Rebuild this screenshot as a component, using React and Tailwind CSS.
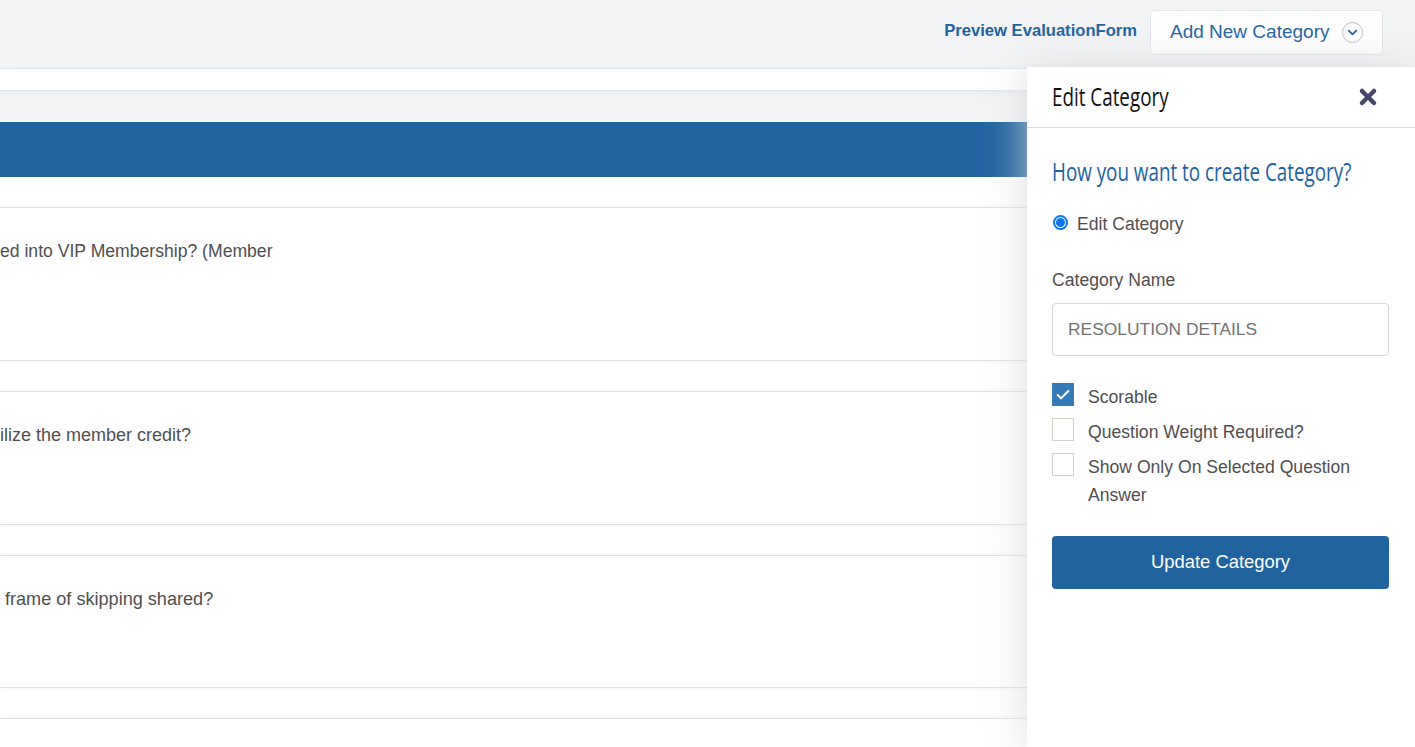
import React from 'react';
import { Check, ChevronDown, X } from 'lucide-react';

const questions = [
  { text: 'ed into VIP Membership? (Member', height: 'h-[154px]', type: 'pl-0 text-[17.6px]' },
  { text: 'ilize the member credit?', height: 'h-[134px]', type: 'pl-0 text-[18px]' },
  { text: 'frame of skipping shared?', height: 'h-[133px]', type: 'pl-[5px] text-[18.1px]' },
];

const options = [
  { label: 'Scorable', checked: true },
  { label: 'Question Weight Required?', checked: false },
  { label: 'Show Only On Selected Question Answer', checked: false },
];

const headingFont = "origin-left scale-x-[0.753] whitespace-nowrap font-['Open_Sans',sans-serif]";

const App = () => {
  return (
    <div className="relative h-[747px] w-[1415px] overflow-hidden bg-white font-['Liberation_Sans',Arial,sans-serif]">
      {/* Top bar */}
      <div className="flex h-[68px] items-start justify-end bg-[#f3f4f6] pr-[32px] pt-[10px]">
        <a className="mr-[13px] mt-[11px] text-[16.6px] font-bold leading-[20px] text-[#20639f]">Preview EvaluationForm</a>
        <button className="flex h-[45px] w-[233px] items-center rounded border border-[#e2e5ea] bg-white pl-[19px] text-[19px] text-[#20639f]">
          Add New Category
          <span className="ml-[13px] flex h-[21px] w-[21px] items-center justify-center rounded-full border border-[#b9bec6]">
            <ChevronDown className="h-[15px] w-[15px] text-[#20639f]" strokeWidth={3} />
          </span>
        </button>
      </div>

      <div className="relative h-[23px] border-y border-[#e3e5e9] bg-white shadow-[0_2px_10px_rgba(0,0,0,0.04)]"></div>
      <div className="h-[31px] bg-[#f3f4f6]"></div>
      <div className="h-[55px] bg-[#20639f]"></div>
      <div className="h-[30px] bg-white"></div>

      {/* Question rows */}
      <div className="flex flex-col gap-[30px]">
        {questions.map((q) => (
          <div key={q.text} className={`${q.height} ${q.type} relative border-y border-[#e0e2e5] bg-white pt-[32px] leading-[22px] text-[#4f4f4f] shadow-[0_0_6px_rgba(0,0,0,0.05)]`}>
            {q.text}
          </div>
        ))}
        <div className="relative h-[40px] border-t border-[#e0e2e5] bg-white shadow-[0_0_6px_rgba(0,0,0,0.05)]"></div>
      </div>

      {/* Edit panel */}
      <aside className="absolute bottom-0 right-0 top-[67px] z-10 w-[388px] bg-white shadow-[0_0_40px_rgba(215,215,215,0.85)]">
        <div className="flex h-[61px] items-center justify-between border-b border-[#d8dfe8] pl-[25px] pr-[35px]">
          <h2 className={`${headingFont} text-[25px] text-[#111]`}>Edit Category</h2>
          <X className="h-[24px] w-[24px] text-[#45466a]" strokeWidth={4.5} />
        </div>
        <div className="pl-[25px] pr-[26px]">
          <h3 className={`${headingFont} mt-[25px] text-[25px] leading-[36px] text-[#20639f]`}>How you want to create Category?</h3>
          <label className="mt-[22px] flex h-[26px] items-center text-[17.6px] text-[#4f4f4f]">
            <span className="-mt-[3px] ml-[1px] mr-[9px] flex h-[15px] w-[15px] items-center justify-center rounded-full border-2 border-[#0b76ef]">
              <span className="h-[9px] w-[9px] rounded-full bg-[#0b76ef]"></span>
            </span>
            Edit Category
          </label>
          <div className="mt-[30px] text-[17.6px] leading-[26px] text-[#4f4f4f]">Category Name</div>
          <input
            readOnly
            value="RESOLUTION DETAILS"
            className="mt-[10px] h-[53px] w-full rounded border border-[#d3d6da] px-[15px] text-[17.4px] text-[#737373] outline-none"
          />
          <div className="mt-[28px] flex flex-col gap-[8px]">
            {options.map((o) => (
              <div key={o.label} className="flex items-start text-[17.6px] leading-[28px] text-[#4f4f4f]">
                <span className={`mr-[14px] -mt-[1px] flex h-[23px] w-[22px] shrink-0 items-center justify-center border ${o.checked ? 'border-[#337ab7] bg-[#337ab7]' : 'border-[#d5d2cd] bg-white'}`}>
                  {o.checked && <Check className="h-[16px] w-[16px] text-white" strokeWidth={3} />}
                </span>
                <span className="-mt-[1px]">{o.label}</span>
              </div>
            ))}
          </div>
          <button className="mt-[27px] h-[53px] w-full rounded bg-[#20639f] pb-[2px] text-[18.4px] text-white">Update Category</button>
        </div>
      </aside>
    </div>
  );
};

export default App;
